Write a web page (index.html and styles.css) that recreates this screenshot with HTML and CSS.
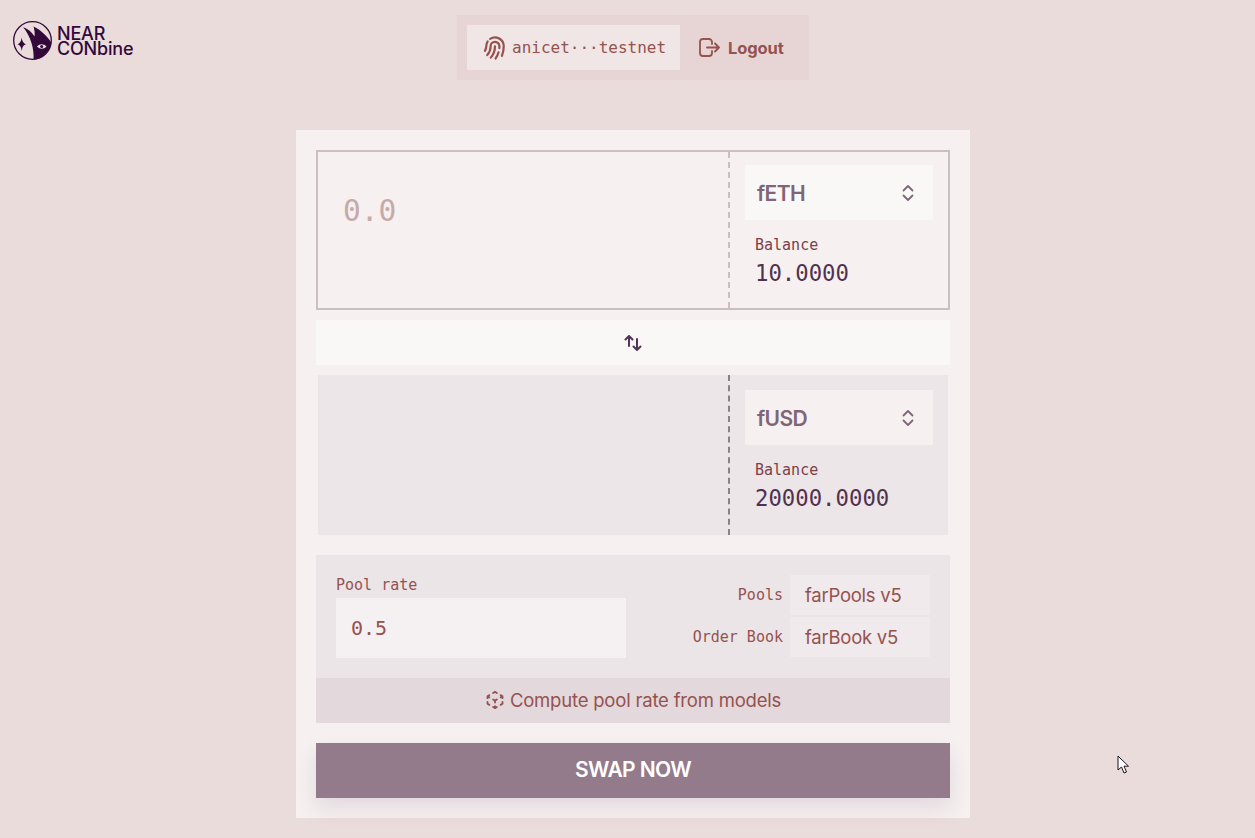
FILE: index.html
```html
<!DOCTYPE html>
<html lang="en">
<head>
    <meta charset="UTF-8">
    <meta name="viewport" content="width=device-width, initial-scale=1.0">
    <title>NEAR CONbine</title>
    <link rel="stylesheet" href="styles.css">
</head>
<body>
    <header class="topbar">
        <a class="logo" href="#">
            <svg class="logo-mark" viewBox="0 0 40 40" width="40" height="40">
                <circle cx="19.5" cy="19.5" r="18.8" fill="none" stroke="#33083a" stroke-width="1.3"/>
                <path class="logo-fill" d="M10 6C15 8 19 11 21.5 15.5C22 12 21.5 9 20.5 5.5C28 9 34 15 38.3 21.5C37.5 30 29 38.5 20.5 38.8C21.5 28 17.5 15 10 6Z"/>
                <path class="logo-fill" d="M8.7 16.5C9.2 20.5 10.5 22.5 13 23.3C10.5 24 9.2 26 8.7 30C8.2 26 6.9 24 4.4 23.3C6.9 22.5 8.2 20.5 8.7 16.5Z"/>
                <path class="logo-eye" d="M24 25.5C27 22.6 30.5 22.6 33.5 25.5C30.5 28.4 27 28.4 24 25.5Z"/>
                <circle class="logo-fill" cx="28.7" cy="25.5" r="1.5"/>
            </svg>
            <span class="logo-text">NEAR<br>CONbine</span>
        </a>
        <nav class="account">
            <div class="account-name">
                <svg class="icon-print" viewBox="0 0 24 24"><path d="M7.864 4.243A7.5 7.5 0 0 1 19.5 10.5c0 2.92-.556 5.709-1.568 8.268M5.742 6.364A7.465 7.465 0 0 0 4.5 10.5a7.464 7.464 0 0 1-1.15 3.993m1.989 3.559A11.209 11.209 0 0 0 8.25 10.5a3.75 3.75 0 1 1 7.5 0c0 .527-.021 1.049-.064 1.565M12 10.5a14.94 14.94 0 0 1-3.6 9.75m6.633-4.596a18.666 18.666 0 0 1-2.485 5.33"/></svg>
                <span>anicet···testnet</span>
            </div>
            <a class="logout" href="#">
                <svg class="icon-logout" viewBox="0 0 21 19"><path d="M13 6V4a3 3 0 0 0-3-3H4a3 3 0 0 0-3 3v11a3 3 0 0 0 3 3h6a3 3 0 0 0 3-3v-2M8 9.5H20M16 5.5l4 4-4 4"/></svg>
                <span>Logout</span>
            </a>
        </nav>
    </header>

    <main class="card">
        <section class="token-box token-box-from">
            <div class="amount amount-empty">0.0</div>
            <div class="token-side">
                <div class="token-select">
                    <span>fETH</span>
                    <svg class="icon-chevrons" viewBox="0 0 12 18"><path d="M1.5 6.5 6 2l4.5 4.5M1.5 11.5 6 16l4.5-4.5"/></svg>
                </div>
                <div class="balance-label">Balance</div>
                <div class="balance-value">10.0000</div>
            </div>
        </section>

        <button class="switch-btn" type="button">
            <svg class="icon-switch" viewBox="0 0 18 16"><path d="M5 11V1M1.5 4.5 5 1l3.5 3.5M13 4v11M9.5 11.5 13 15l3.5-3.5"/></svg>
        </button>

        <section class="token-box token-box-to">
            <div class="amount"></div>
            <div class="token-side">
                <div class="token-select token-select-muted">
                    <span>fUSD</span>
                    <svg class="icon-chevrons" viewBox="0 0 12 18"><path d="M1.5 6.5 6 2l4.5 4.5M1.5 11.5 6 16l4.5-4.5"/></svg>
                </div>
                <div class="balance-label">Balance</div>
                <div class="balance-value">20000.0000</div>
            </div>
        </section>

        <section class="pool">
            <div class="pool-body">
                <div class="pool-rate">
                    <div class="pool-label">Pool rate</div>
                    <div class="pool-input">0.5</div>
                </div>
                <div class="pool-sources">
                    <div class="source-row">
                        <span class="pool-label">Pools</span>
                        <span class="source-value">farPools v5</span>
                    </div>
                    <div class="source-row">
                        <span class="pool-label">Order Book</span>
                        <span class="source-value">farBook v5</span>
                    </div>
                </div>
            </div>
            <button class="compute-btn" type="button">
                <svg class="icon-cube" viewBox="0 0 24 24"><path d="m21 7.5-2.25-1.313M21 7.5v2.25m0-2.25-2.25 1.313M3 7.5l2.25-1.313M3 7.5l2.25 1.313M3 7.5v2.25m9 3 2.25-1.313M12 12.75l-2.25-1.313M12 12.75V15m0 6.75 2.25-1.313M12 21.75V19.5m0 2.25-2.25-1.313m0-16.875L12 2.25l2.25 1.313M21 14.25v2.25l-2.25 1.313m-13.5 0L3 16.5v-2.25"/></svg>
                <span>Compute pool rate from models</span>
            </button>
        </section>

        <button class="swap-btn" type="button">SWAP NOW</button>
    </main>

    <!-- mouse pointer caught in the screenshot -->
    <svg class="pointer" viewBox="0 0 14 20" width="14" height="20">
        <path d="M1 1V15L4.5 12L7 18L9.5 17L7 11.2H11.5Z"/>
    </svg>
</body>
</html>
```

FILE: styles.css
```css
html, body {
    margin: 0;
    height: 838px;
    overflow: hidden;
}

body {
    position: relative;
    background-color: #eadcda;
    font-family: Inter, "Liberation Sans", sans-serif;
    color: #95524f;
}

svg path {
    fill: none;
    stroke: currentColor;
    stroke-width: 1.8;
    stroke-linecap: round;
    stroke-linejoin: round;
}

.icon-print { width: 28px; height: 28px; flex: none; }
.icon-print path { stroke-width: 1.9; }
.icon-logout { width: 21px; height: 19px; flex: none; }
.icon-chevrons { width: 12px; height: 18px; flex: none; }
.icon-switch { width: 18px; height: 16px; }
.icon-switch path { stroke-width: 2; }
.icon-cube { width: 20px; height: 20px; flex: none; }
.icon-cube path { stroke-width: 2.2; }

/* top bar */
.topbar {
    position: relative;
    display: flex;
    justify-content: center;
    padding: 15px 0 50px 11px;
}

.logo {
    position: absolute;
    top: 21px;
    left: 13px;
    display: flex;
    align-items: center;
    color: #33083a;
    text-decoration: none;
}

.logo-mark {
    margin-right: 4px;
}

.logo-mark .logo-fill {
    fill: #33083a;
    stroke: none;
}

.logo-mark .logo-eye {
    fill: #eadcda;
    stroke: none;
}

.logo-text {
    font-size: 18px;
    font-weight: 500;
    line-height: 15px;
    letter-spacing: -0.2px;
}

.account {
    display: flex;
    align-items: center;
    width: 332px;
    height: 45px;
    padding: 10px;
    background-color: #e7d5d5;
}

.account-name {
    display: flex;
    align-items: center;
    gap: 3px;
    width: 213px;
    height: 45px;
    padding-left: 14px;
    box-sizing: border-box;
    background-color: #f0e6e6;
    font-family: "DejaVu Sans Mono", monospace;
    font-size: 16px;
}

.logout {
    display: flex;
    align-items: center;
    gap: 8px;
    margin-left: 19px;
    color: #95524f;
    font-size: 16.5px;
    font-weight: 700;
    letter-spacing: -0.1px;
    text-decoration: none;
}

/* swap card */
.card {
    display: flex;
    flex-direction: column;
    width: 634px;
    margin-left: 296px;
    padding: 20px;
    background-color: #f6f0f0;
}

.token-box {
    display: flex;
    box-sizing: border-box;
    height: 160px;
    border: 2px solid #cbbfc3;
}

.token-box-to {
    border-color: transparent;
    border-top: 0;
    border-bottom: 0;
    background-clip: padding-box;
    background-color: #ece6e8;
}

.amount {
    flex: 1;
    padding: 42px 0 0 25px;
    font-family: "DejaVu Sans Mono", monospace;
    font-size: 29.5px;
}

.amount-empty {
    color: #c6aaa8;
}

.token-side {
    box-sizing: border-box;
    width: 220px;
    padding: 13px 15px 0 15px;
    border-left: 2px dashed #cbbfc3;
}

.token-box-to .token-side {
    padding-top: 15px;
    border-left-color: #8d8087;
}

.token-select {
    display: flex;
    align-items: center;
    justify-content: space-between;
    height: 55px;
    padding: 1px 19px 0 12px;
    box-sizing: border-box;
    background-color: #faf8f6;
    color: #7f6575;
    font-size: 21px;
    font-weight: 600;
    letter-spacing: -0.6px;
}

.token-select-muted {
    background-color: #f6f0f0;
}

.balance-label {
    margin: 16px 0 0 10px;
    color: #7c4048;
    font-family: "DejaVu Sans Mono", monospace;
    font-size: 15px;
    line-height: 18px;
}

.balance-value {
    margin: 5px 0 0 10px;
    color: #52304f;
    font-family: "DejaVu Sans Mono", monospace;
    font-size: 22.3px;
    line-height: 28px;
}

.switch-btn {
    display: flex;
    align-items: center;
    justify-content: center;
    height: 45px;
    margin: 10px 0;
    padding: 0;
    border: none;
    background-color: #faf8f6;
    color: #553359;
}

/* pool settings */
.pool {
    margin-top: 20px;
    background-color: #ebe5e7;
}

.pool-body {
    display: flex;
    justify-content: space-between;
    height: 83px;
    padding: 20px;
}

.pool-label {
    font-family: "DejaVu Sans Mono", monospace;
    font-size: 15px;
    line-height: 18px;
}

.pool-rate {
    width: 290px;
}

.pool-rate .pool-label {
    padding-top: 1px;
}

.pool-input {
    display: flex;
    align-items: center;
    height: 60px;
    margin-top: 4px;
    padding-left: 15px;
    background-color: #f5f0f2;
    font-family: "DejaVu Sans Mono", monospace;
    font-size: 20px;
}

.pool-sources {
    display: flex;
    flex-direction: column;
    gap: 2px;
}

.source-row {
    display: flex;
    align-items: center;
    justify-content: flex-end;
    gap: 7px;
}

.source-value {
    box-sizing: border-box;
    width: 140px;
    height: 40px;
    padding-left: 15px;
    background-color: #f0eaed;
    font-size: 18.5px;
    letter-spacing: -0.25px;
    line-height: 40px;
}

.compute-btn {
    display: flex;
    align-items: center;
    justify-content: center;
    gap: 5px;
    width: 100%;
    height: 45px;
    padding: 0 0 2px;
    border: none;
    background-color: #e3d8dc;
    color: #95524f;
    font-family: inherit;
    font-size: 18.5px;
    letter-spacing: -0.2px;
}

.swap-btn {
    height: 55px;
    margin-top: 20px;
    padding: 0 0 2px;
    border: none;
    background-color: #937b8b;
    box-shadow: 0 10px 20px rgba(90, 60, 90, 0.12);
    color: #fff;
    font-family: inherit;
    font-size: 21px;
    font-weight: 600;
    letter-spacing: -0.6px;
}

.pointer {
    position: absolute;
    top: 755px;
    left: 1117px;
}

.pointer path {
    fill: #fff;
    stroke: #1c1020;
    stroke-width: 1;
    stroke-linecap: butt;
    stroke-linejoin: miter;
}
```
